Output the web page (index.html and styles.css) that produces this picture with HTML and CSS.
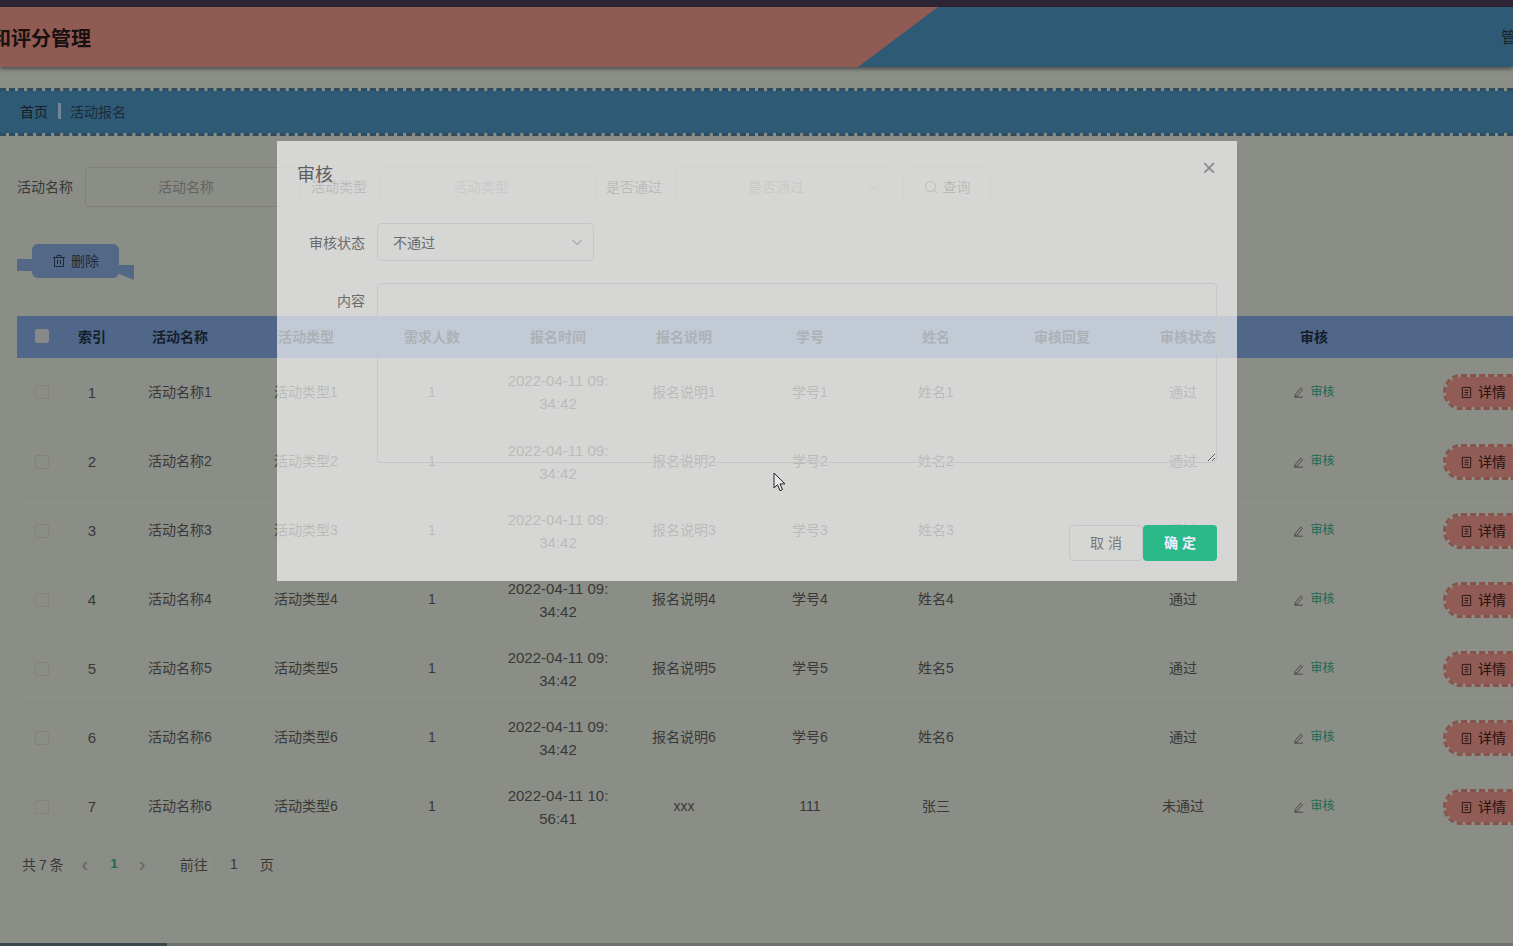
FILE: index.html
```html
<html>
    <head>
        <title>活动报名</title>
        <meta charset="utf-8">
        <link rel="stylesheet" href="styles.css">
    </head>

    <body>
        <svg class="Defs" width="0" height="0">
            <symbol id="i-edit" viewBox="0 0 14 14"><path d="M2.5 10 9 2.5l2 1.8-6.3 7.4-2.6.6zM1.5 13h10" fill="none" stroke="currentColor"/></symbol>
            <symbol id="i-doc" viewBox="0 0 14 14"><path d="M2.5 1.5h9v11h-9zM5 4.5h4M5 7h4M5 9.5h4" fill="none" stroke="currentColor"/></symbol>
            <symbol id="i-trash" viewBox="0 0 14 14"><path d="M2.5 3.5h9v9h-9zM1 3.5h12M5 3.5v-2h4v2M5.5 6v4M8.500 6v4" fill="none" stroke="currentColor"/></symbol>
            <symbol id="i-search" viewBox="0 0 14 14"><circle cx="6.500" cy="6.500" r="5" fill="none" stroke="currentColor"/><path d="m10 10 3 3" fill="none" stroke="currentColor"/></symbol>
            <symbol id="i-down" viewBox="0 0 12 12"><path d="m1.500 4 4.500 4.500L10.500 4" fill="none" stroke="currentColor"/></symbol>
        </svg>

        <div class="TopStrip"></div>

        <!-- Cabecera -->
        <div class="Header">
            <div class="HeaderLeft"><h1>和评分管理</h1></div>
            <div class="HeaderRight">管理员</div>
        </div>

        <!-- Ruta -->
        <div class="Crumb">
            <span>首页</span>
            <i></i>
            <span class="CrumbNow">活动报名</span>
        </div>

        <div class="Main">
            <!-- Busqueda -->
            <div class="Search">
                <label>活动名称</label>
                <div class="Field">活动名称</div>
                <label>活动类型</label>
                <div class="Field">活动类型</div>
                <label>是否通过</label>
                <div class="Field">是否通过<svg class="Arrow"><use href="#i-down"/></svg></div>
                <div class="SearchBtn"><svg class="Ico"><use href="#i-search"/></svg>查询</div>
            </div>

            <div class="Actions">
                <div class="DelBtn"><svg class="Ico"><use href="#i-trash"/></svg>删除</div>
            </div>

            <!-- Tabla -->
            <table class="Tabla">
                <colgroup>
                    <col class="C50"><col class="C50"><col class="C126"><col class="C126"><col class="C126"><col class="C126"><col class="C126"><col class="C126"><col class="C126"><col class="C126"><col class="C126"><col class="C126"><col class="CLast">
                </colgroup>
                <thead>
                    <tr>
                        <th><span class="Check CheckHead"></span></th>
                        <th>索引</th><th>活动名称</th><th>活动类型</th><th>需求人数</th><th>报名时间</th><th>报名说明</th><th>学号</th><th>姓名</th><th>审核回复</th><th>审核状态</th><th>审核</th><th></th>
                    </tr>
                </thead>
                <tbody>
                    <tr>
                        <td><span class="Check"></span></td><td class="Num">1</td><td>活动名称1</td><td>活动类型1</td><td>1</td><td class="Fecha">2022-04-11 09:<br>34:42</td><td>报名说明1</td><td>学号1</td><td>姓名1</td><td></td><td class="Estado">通过</td>
                        <td><span class="Audit"><svg class="Ico"><use href="#i-edit"/></svg>审核</span></td>
                        <td class="Last"><span class="Detail"><svg class="Ico"><use href="#i-doc"/></svg>详情</span></td>
                    </tr>
                    <tr>
                        <td><span class="Check"></span></td><td class="Num">2</td><td>活动名称2</td><td>活动类型2</td><td>1</td><td class="Fecha">2022-04-11 09:<br>34:42</td><td>报名说明2</td><td>学号2</td><td>姓名2</td><td></td><td class="Estado">通过</td>
                        <td><span class="Audit"><svg class="Ico"><use href="#i-edit"/></svg>审核</span></td>
                        <td class="Last"><span class="Detail"><svg class="Ico"><use href="#i-doc"/></svg>详情</span></td>
                    </tr>
                    <tr>
                        <td><span class="Check"></span></td><td class="Num">3</td><td>活动名称3</td><td>活动类型3</td><td>1</td><td class="Fecha">2022-04-11 09:<br>34:42</td><td>报名说明3</td><td>学号3</td><td>姓名3</td><td></td><td class="Estado">通过</td>
                        <td><span class="Audit"><svg class="Ico"><use href="#i-edit"/></svg>审核</span></td>
                        <td class="Last"><span class="Detail"><svg class="Ico"><use href="#i-doc"/></svg>详情</span></td>
                    </tr>
                    <tr>
                        <td><span class="Check"></span></td><td class="Num">4</td><td>活动名称4</td><td>活动类型4</td><td>1</td><td class="Fecha">2022-04-11 09:<br>34:42</td><td>报名说明4</td><td>学号4</td><td>姓名4</td><td></td><td class="Estado">通过</td>
                        <td><span class="Audit"><svg class="Ico"><use href="#i-edit"/></svg>审核</span></td>
                        <td class="Last"><span class="Detail"><svg class="Ico"><use href="#i-doc"/></svg>详情</span></td>
                    </tr>
                    <tr>
                        <td><span class="Check"></span></td><td class="Num">5</td><td>活动名称5</td><td>活动类型5</td><td>1</td><td class="Fecha">2022-04-11 09:<br>34:42</td><td>报名说明5</td><td>学号5</td><td>姓名5</td><td></td><td class="Estado">通过</td>
                        <td><span class="Audit"><svg class="Ico"><use href="#i-edit"/></svg>审核</span></td>
                        <td class="Last"><span class="Detail"><svg class="Ico"><use href="#i-doc"/></svg>详情</span></td>
                    </tr>
                    <tr>
                        <td><span class="Check"></span></td><td class="Num">6</td><td>活动名称6</td><td>活动类型6</td><td>1</td><td class="Fecha">2022-04-11 09:<br>34:42</td><td>报名说明6</td><td>学号6</td><td>姓名6</td><td></td><td class="Estado">通过</td>
                        <td><span class="Audit"><svg class="Ico"><use href="#i-edit"/></svg>审核</span></td>
                        <td class="Last"><span class="Detail"><svg class="Ico"><use href="#i-doc"/></svg>详情</span></td>
                    </tr>
                    <tr>
                        <td><span class="Check"></span></td><td class="Num">7</td><td>活动名称6</td><td>活动类型6</td><td>1</td><td class="Fecha">2022-04-11 10:<br>56:41</td><td>xxx</td><td>111</td><td>张三</td><td></td><td class="Estado">未通过</td>
                        <td><span class="Audit"><svg class="Ico"><use href="#i-edit"/></svg>审核</span></td>
                        <td class="Last"><span class="Detail"><svg class="Ico"><use href="#i-doc"/></svg>详情</span></td>
                    </tr>
                </tbody>
            </table>

            <!-- Paginacion -->
            <div class="Pager">
                <span class="Total">共 7 条</span>
                <span class="PageArrow">‹</span>
                <b>1</b>
                <span class="PageArrow">›</span>
                <span class="GoTo">前往</span>
                <span class="PageInput">1</span>
                <span>页</span>
            </div>
        </div>

        <!-- Mascara y dialogo -->
        <div class="Mask">
            <div class="Dialog">
                <div class="DialogTitle">审核</div>
                <span class="Close">×</span>
                <div class="DialogRow">
                    <label>审核状态</label>
                    <div class="DialogSelect">不通过<svg class="Arrow"><use href="#i-down"/></svg></div>
                </div>
                <div class="DialogRow">
                    <label class="LabelArea">内容</label>
                    <textarea></textarea>
                </div>
                <div class="DialogFoot">
                    <div class="BtnCancel">取 消</div>
                    <div class="BtnOk">确 定</div>
                </div>
            </div>

            <svg class="Cursor" width="14" height="21" viewBox="0 0 14 21"><path d="M1 1v15l3.500-3.300 2.500 6 2.500-1-2.500-5.800h5z" fill="#e8e8e8" stroke="#222"/></svg>
            <div class="Progress"></div>
        </div>
    </body>
</html>
```

FILE: styles.css
```css
html, body{
    margin: 0;
    height: 946px;
    overflow: hidden;
}

body{
    position: relative;
    background-color: #e8ebe1;
    color: #5f625d;
    font-family: "Liberation Sans", "Noto Sans CJK SC", sans-serif;
    font-size: 14px;
}

.Defs{
    position: absolute;
}

.TopStrip{
    height: 7px;
    background-color: #4e3e58;
}

.Header{
    display: flex;
    height: 60px;
    background-color: #4e96c3;
    box-shadow: 0 2px 4px rgba(0, 0, 0, .45);
    overflow: hidden;
}

.HeaderLeft{
    flex: none;
    width: 938px;
    background-color: #ee988a;
    clip-path: polygon(0 0, 938px 0, 858px 100%, 0 100%);
}

.HeaderLeft h1{
    margin: 0 0 0 -9px;
    font-size: 20px;
    line-height: 64px;
    color: #2e1b1b;
    white-space: nowrap;
}

.HeaderRight{
    flex: none;
    margin-left: 563px;
    line-height: 62px;
    font-size: 16px;
    color: #2b3e48;
    white-space: nowrap;
}

.Crumb{
    display: flex;
    align-items: center;
    box-sizing: border-box;
    height: 48px;
    margin-top: 21px;
    padding: 0 0 2px 20px;
    background-color: #4e96c3;
    background-clip: padding-box;
    border-top: 3px dashed #4e7fa3;
    border-bottom: 3px dashed #4e7fa3;
    color: #23333f;
}

.Crumb i{
    width: 3px;
    height: 16px;
    margin: 0 9px 0 10px;
    background-color: #bfe2f5;
}

.CrumbNow{
    color: #2e4a5c;
}

.Main{
    padding: 31px 0 0 17px;
}

.Search{
    display: flex;
    align-items: center;
    height: 40px;
}

.Search label{
    flex: none;
    width: 56px;
    margin: -2px 13px 0 0;
    white-space: nowrap;
}

.Search label:first-child{
    margin-right: 12px;
}

.Field{
    position: relative;
    flex: none;
    box-sizing: border-box;
    width: 216px;
    height: 40px;
    margin-right: 10px;
    padding-right: 14px;
    border: 1px solid #d2d5ca;
    border-radius: 4px;
    line-height: 38px;
    text-align: center;
    color: #a5a8a2;
}

.Arrow{
    position: absolute;
    top: 50%;
    right: 10px;
    width: 12px;
    height: 12px;
    margin-top: -6px;
    color: #a5a8a2;
}

.Ico{
    width: 14px;
    height: 14px;
    margin-right: 5px;
    vertical-align: -2px;
}

.SearchBtn{
    box-sizing: border-box;
    width: 88px;
    height: 40px;
    margin-left: 2px;
    border: 1px solid #d2d5ca;
    border-radius: 4px;
    line-height: 38px;
    text-align: center;
}

.Actions{
    margin: 37px 0 38px 15px;
}

.DelBtn{
    position: relative;
    width: 87px;
    height: 34px;
    border-radius: 6px;
    background-color: #8aaee0;
    line-height: 34px;
    text-align: center;
    color: #35465e;
}

.DelBtn::before{
    content: "";
    position: absolute;
    left: -15px;
    top: 15px;
    width: 15px;
    height: 12px;
    background-color: #8aaee0;
}

.DelBtn::after{
    content: "";
    position: absolute;
    left: 87px;
    top: 21px;
    width: 15px;
    height: 15px;
    background-color: #8aaee0;
    clip-path: polygon(0 0, 100% 0, 100% 100%, 0 60%);
}

.Tabla{
    table-layout: fixed;
    width: 1640px;
    border-collapse: collapse;
    border-spacing: 0;
    font-size: 14px;
    color: #5f625d;
}

.C50{
    width: 50px;
}

.C126{
    width: 126px;
}

.Tabla th{
    box-sizing: border-box;
    height: 42px;
    padding: 0 0 2px;
    background-color: #85ace6;
    color: #24344a;
    font-weight: bold;
}

.Tabla td{
    height: 69px;
    padding: 0;
    border-bottom: 1px solid #e2e5db;
    line-height: 23px;
    text-align: center;
}

.Tabla .Num{
    font-size: 15px;
}

.Tabla .Fecha{
    font-size: 15px;
}

.Tabla .Estado{
    padding-right: 10px;
}

.Tabla .Last{
    padding-left: 66px;
    text-align: left;
}

.Check{
    display: inline-block;
    box-sizing: border-box;
    width: 14px;
    height: 14px;
    border: 1px solid #dcd9d0;
    border-radius: 2px;
    vertical-align: -2px;
}

.CheckHead{
    background-color: #e4e4e4;
    border-color: #e4e4e4;
}

.Audit{
    display: inline-flex;
    align-items: center;
    font-size: 12px;
    color: #34b08a;
}

.Audit .Ico{
    width: 12px;
    height: 12px;
    color: #666;
}

.Detail{
    display: inline-block;
    box-sizing: border-box;
    width: 110px;
    height: 36px;
    padding-left: 14px;
    border: 3px dashed #e58a7d;
    border-radius: 18px;
    background-color: #f09a8e;
    background-clip: padding-box;
    line-height: 30px;
    color: #40211d;
    vertical-align: middle;
}

.Detail .Ico{
    margin-right: 5px;
    width: 13px;
    height: 13px;
}

.Pager{
    display: flex;
    align-items: center;
    height: 26px;
    margin: 9px 0 0 5px;
}

.Total{
    margin-right: 18px;
    word-spacing: -1px;
}

.PageArrow{
    width: 10px;
    font-size: 20px;
    line-height: 20px;
    color: #a5a8a2;
}

.Pager b{
    margin: 0 21px 0 19px;
    font-size: 13px;
    color: #34b08a;
}

.GoTo{
    margin-left: 31px;
}

.PageInput{
    box-sizing: border-box;
    width: 40px;
    height: 22px;
    margin: 0 6px;
    border: 1px solid #e2e5db;
    border-radius: 3px;
    line-height: 20px;
    text-align: center;
}

/* mascara */
.Mask{
    position: absolute;
    top: 0;
    left: 0;
    width: 100%;
    height: 100%;
    background-color: rgba(0, 0, 0, .4);
}

.Dialog{
    position: relative;
    box-sizing: border-box;
    width: 960px;
    height: 440px;
    margin: 141px 0 0 277px;
    padding: 22px 20px 20px;
    background-color: rgba(255, 255, 255, .65);
}

.DialogTitle{
    font-size: 18px;
    line-height: 24px;
    color: #5e5e5e;
}

.Close{
    position: absolute;
    top: 15px;
    right: 21px;
    font-size: 24px;
    line-height: 24px;
    color: #8a8d90;
}

.DialogRow{
    display: flex;
    margin-top: 22px;
    color: #6a6b6c;
}

.DialogTitle + .Close + .DialogRow{
    margin-top: 36px;
}

.DialogRow label{
    flex: none;
    width: 68px;
    height: 38px;
    margin-right: 12px;
    line-height: 40px;
    text-align: right;
}

.DialogRow .LabelArea{
    line-height: 36px;
}

.DialogSelect{
    position: relative;
    box-sizing: border-box;
    width: 217px;
    height: 38px;
    padding-left: 15px;
    border: 1px solid #c4c6c8;
    border-radius: 4px;
    line-height: 38px;
}

.DialogSelect .Arrow{
    color: #85888b;
}

textarea{
    flex: 1;
    box-sizing: border-box;
    height: 180px;
    border: 1px solid #c4c6c8;
    border-radius: 4px;
    background: transparent;
    outline: none;
}

.DialogFoot{
    display: flex;
    justify-content: flex-end;
    margin-top: 62px;
}

.BtnCancel, .BtnOk{
    box-sizing: border-box;
    width: 74px;
    height: 36px;
    border-radius: 4px;
    line-height: 36px;
    text-align: center;
}

.BtnCancel{
    border: 1px solid #c4c6c8;
    line-height: 34px;
    color: #77787a;
}

.BtnOk{
    background-color: #2bb98a;
    color: #eef;
    font-weight: bold;
}

.Cursor{
    position: absolute;
    left: 773px;
    top: 472px;
}

.Progress{
    position: absolute;
    left: 0;
    bottom: 0;
    width: 100%;
    height: 3px;
    background: linear-gradient(to right, #39474d 167px, #70726e 167px);
}
```
